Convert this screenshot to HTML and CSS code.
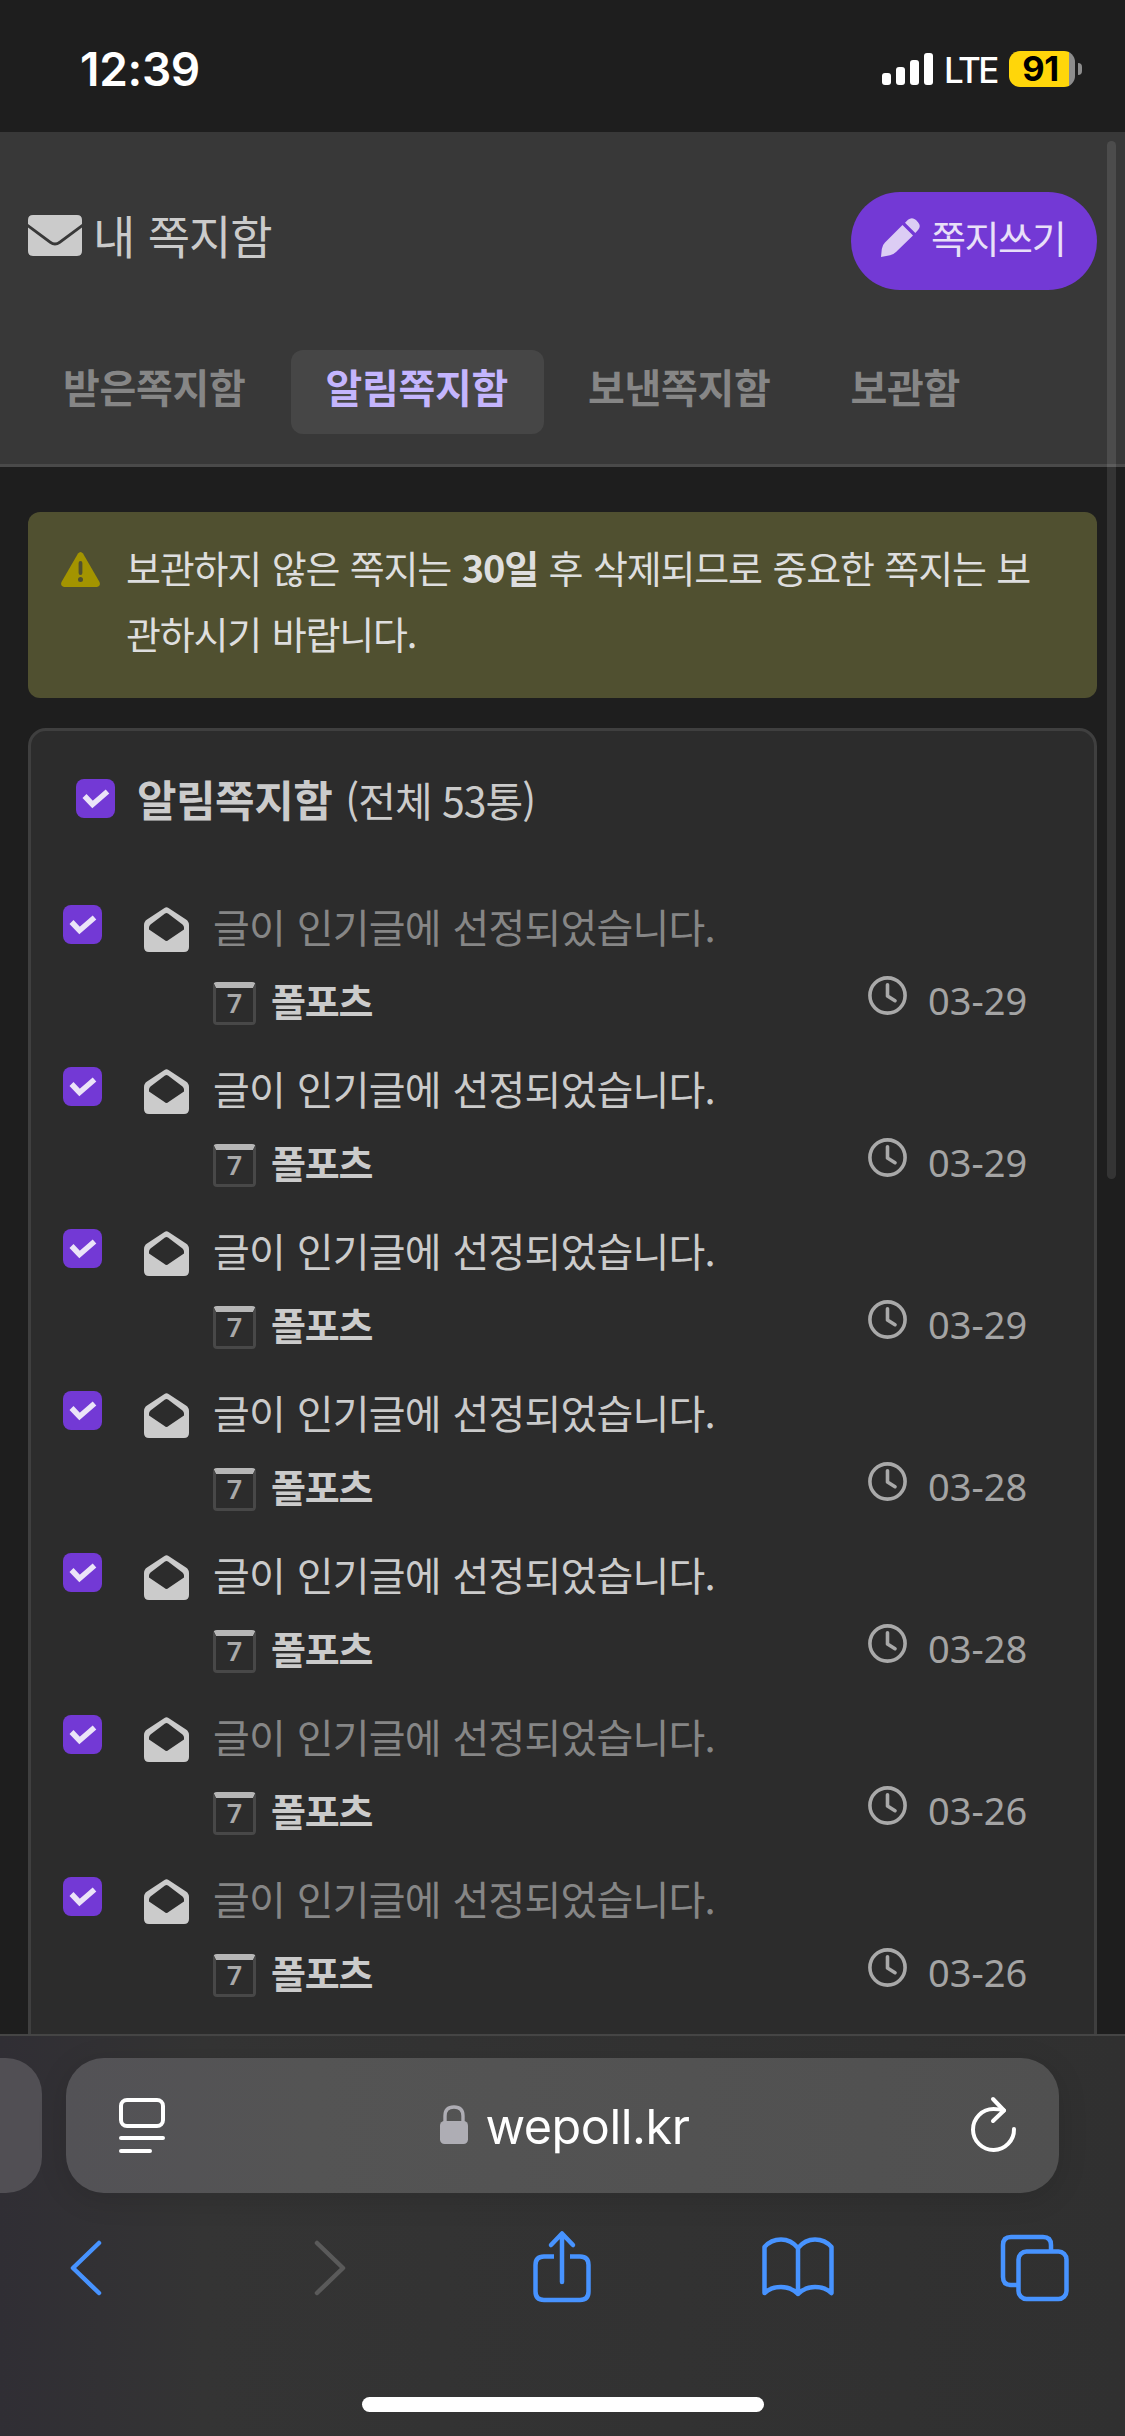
FILE: index.html
```html
<!DOCTYPE html>
<html lang="ko">
<head>
<meta charset="utf-8">
<title>내 쪽지함</title>
<link rel="stylesheet" href="styles.css">
</head>
<body>
<svg class="defs" width="0" height="0">
  <symbol id="open-mail" viewBox="0 0 45 45"><path fill-rule="evenodd" d="M20.500 1Q22.500-.5 24.500 1L42 12.500Q45 14.500 45 18V40Q45 45 40 45H5Q0 45 0 40V18Q0 14.500 3 12.500ZM24 6.500Q22.500 5.600 21 6.500L6.500 17.500Q5 19 5 20.500V22.500L20.500 33Q22.500 35 24.500 33L40 22.500V20.500Q40 19 38.500 17.500Z"/></symbol>
  <symbol id="check" viewBox="0 0 39 39"><path d="M8.500 17L16.500 25.500L31.500 12.500" fill="none" stroke="#ebe4f8" stroke-width="5.500"/></symbol>
  <symbol id="clock" viewBox="0 0 39 39"><g fill="none" stroke="currentColor" stroke-width="3.600" stroke-linecap="round" stroke-linejoin="round"><circle cx="19.500" cy="19.500" r="17.600"/><path d="M19.500 8.700V20L27 24.700"/></g></symbol>
</svg>
<div class="phone">
  <header class="status">
    <span class="time">12:39</span>
    <span class="signal"><i></i><i></i><i></i><i></i></span>
    <span class="lte">LTE</span>
    <span class="battery">91</span><span class="nub"></span>
  </header>

  <main class="page">
    <section class="head">
      <div class="title-row">
        <svg class="mail" viewBox="0 0 54 41"><path d="M5 0H49Q54 0 54 5V9L31 26Q27 29 23 26L0 9V5Q0 0 5 0ZM0 12.500L21.500 28.500Q27 32.500 32.500 28.500L54 12.500V36Q54 41 49 41H5Q0 41 0 36Z"/></svg>
        <h1>내 쪽지함</h1>
        <button class="write">
          <svg viewBox="0 0 39 39"><path d="M21.500 7L32 17.500L15 34Q12.500 36.500 9 37.200L0 39L.8 31Q1.300 27 4 24.500ZM24 4.700L27 1.800Q31-1.500 35 2L37 4.200Q40.500 8 37 12L34.300 15Z"/></svg>
          <span>쪽지쓰기</span>
        </button>
      </div>
      <nav class="tabs">
        <a>받은쪽지함</a><a class="active">알림쪽지함</a><a>보낸쪽지함</a><a>보관함</a>
      </nav>
    </section>

    <section class="alert">
      <svg viewBox="0 0 39 35"><path fill="#a39400" d="M17 1.500Q19.500-1.500 22 1.500L38.500 30Q40 34 36 35H3Q-1 34 .5 30Z"/><path d="M19.500 11V21" stroke="#505030" stroke-width="3.800" stroke-linecap="round"/><circle cx="19.500" cy="27.500" r="2.500" fill="#505030"/></svg>
      <p>보관하지 않은 쪽지는 <b>30일</b> 후 삭제되므로 중요한 쪽지는 보<br>관하시기 바랍니다.</p>
    </section>

    <section class="card">
      <div class="card-head"><svg class="box"><use href="#check"/></svg><h2>알림쪽지함</h2><span>(전체 53통)</span></div>
      <div class="row read"><svg class="box"><use href="#check"/></svg><svg class="open"><use href="#open-mail"/></svg><div class="msg"><p>글이 인기글에 선정되었습니다.</p><div class="meta"><i class="level">7</i><b>폴포츠</b><svg class="clock"><use href="#clock"/></svg><time>03-29</time></div></div></div>
      <div class="row"><svg class="box"><use href="#check"/></svg><svg class="open"><use href="#open-mail"/></svg><div class="msg"><p>글이 인기글에 선정되었습니다.</p><div class="meta"><i class="level">7</i><b>폴포츠</b><svg class="clock"><use href="#clock"/></svg><time>03-29</time></div></div></div>
      <div class="row"><svg class="box"><use href="#check"/></svg><svg class="open"><use href="#open-mail"/></svg><div class="msg"><p>글이 인기글에 선정되었습니다.</p><div class="meta"><i class="level">7</i><b>폴포츠</b><svg class="clock"><use href="#clock"/></svg><time>03-29</time></div></div></div>
      <div class="row"><svg class="box"><use href="#check"/></svg><svg class="open"><use href="#open-mail"/></svg><div class="msg"><p>글이 인기글에 선정되었습니다.</p><div class="meta"><i class="level">7</i><b>폴포츠</b><svg class="clock"><use href="#clock"/></svg><time>03-28</time></div></div></div>
      <div class="row"><svg class="box"><use href="#check"/></svg><svg class="open"><use href="#open-mail"/></svg><div class="msg"><p>글이 인기글에 선정되었습니다.</p><div class="meta"><i class="level">7</i><b>폴포츠</b><svg class="clock"><use href="#clock"/></svg><time>03-28</time></div></div></div>
      <div class="row read"><svg class="box"><use href="#check"/></svg><svg class="open"><use href="#open-mail"/></svg><div class="msg"><p>글이 인기글에 선정되었습니다.</p><div class="meta"><i class="level">7</i><b>폴포츠</b><svg class="clock"><use href="#clock"/></svg><time>03-26</time></div></div></div>
      <div class="row read"><svg class="box"><use href="#check"/></svg><svg class="open"><use href="#open-mail"/></svg><div class="msg"><p>글이 인기글에 선정되었습니다.</p><div class="meta"><i class="level">7</i><b>폴포츠</b><svg class="clock"><use href="#clock"/></svg><time>03-26</time></div></div></div>
    </section>
  </main>

  <footer class="browser">
    <div class="address-row">
      <div class="prev-tab"></div>
      <div class="address">
        <svg class="reader" viewBox="0 0 46 55"><g fill="none" stroke="#fff" stroke-width="4" stroke-linecap="round"><rect x="2" y="2" width="42" height="26" rx="6"/><path d="M2 40H44M2 53H31"/></g></svg>
        <div class="site"><svg viewBox="0 0 28 39"><rect y="16" width="28" height="23" rx="4.500" fill="#aeadb4"/><path d="M5 18V11Q5 2 14 2T23 11V18" fill="none" stroke="#aeadb4" stroke-width="3.400"/></svg><span>wepoll.kr</span></div>
        <svg class="reload" viewBox="0 0 46 54"><g fill="none" stroke="#fff" stroke-width="4" stroke-linecap="round" stroke-linejoin="round"><path d="M43 32A20.500 20.500 0 1 1 22.500 12Q28 12 33 13.500"/><path d="M22 2L33 13.500L22 24"/></g></svg>
      </div>
    </div>
    <div class="tools">
      <svg class="back" viewBox="0 0 31 54"><path d="M29 2L3 27L29 52"/></svg>
      <svg class="forward" viewBox="0 0 31 54"><path d="M2 2L28 27L2 52"/></svg>
      <svg class="share" viewBox="0 0 58 72"><path stroke-linecap="butt" d="M21 25.500H11Q2.500 25.500 2.500 34V60.500Q2.500 69 11 69H47Q55.500 69 55.500 60.500V34Q55.500 25.500 47 25.500H37"/><path d="M29 51V3M18 14L29 2.500L40 14"/></svg>
      <svg class="book" viewBox="0 0 72 60"><path d="M36 57V11Q29 2.500 19 2.500Q9 2.500 2.500 10V56Q9 50 19 50Q29 50 36 57Q43 50 53 50Q63 50 69.500 56V10Q63 2.500 53 2.500Q43 2.500 36 11"/></svg>
      <svg class="pages" viewBox="0 0 68 66"><path stroke-linecap="butt" d="M16 50H10Q2 50 2 42V10Q2 2 10 2H42Q50 2 50 10V15"/><rect x="17.500" y="16.500" width="48" height="47.500" rx="8"/></svg>
    </div>
    <div class="home"></div>
  </footer>
  <div class="scrollbar"></div>
</div>
</body>
</html>
```
FILE: styles.css
```css
* { box-sizing: border-box; margin: 0; padding: 0; }
body { width: 1125px; height: 2436px; overflow: hidden; background: #1e1e1e; font-family: "Noto Sans CJK KR", sans-serif; color: #cbcbcb; }
svg { display: block; flex: none; overflow: visible; }
i { font-style: normal; }
.defs { position: absolute; }
.phone { position: relative; height: 2436px; display: flex; flex-direction: column; overflow: hidden; }

.status { height: 132px; flex: none; display: flex; align-items: flex-start; padding: 51px 43px 0 80px; font-family: Inter, sans-serif; color: #fff; }
.time { font-size: 46px; font-weight: 600; line-height: 36px; letter-spacing: -.300px; margin-right: auto; }
.signal { display: flex; align-items: flex-end; gap: 5px; height: 34px; width: 62px; }
.signal i { width: 9px; background: #fff; border-radius: 3px; }
.signal i:nth-child(1) { height: 12px; }
.signal i:nth-child(2) { height: 18px; }
.signal i:nth-child(3) { height: 25px; }
.signal i:nth-child(4) { height: 32px; }
.lte { width: 65px; font-size: 35px; font-weight: 500; line-height: 38px; letter-spacing: -2.500px; }
.battery { width: 66px; height: 36px; border-radius: 11px; background: linear-gradient(90deg, #ffd60a 60px, #8d8d8d 60px); color: #000; font-size: 34.500px; font-weight: 700; line-height: 36px; text-align: center; letter-spacing: -.300px; padding-right: 3px; }
.nub { width: 4px; height: 12px; margin: 12px 0 0 3px; border-radius: 0 4px 4px 0; background: #8d8d8d; }

.page { height: 1902px; flex: none; overflow: hidden; display: flex; flex-direction: column; }
.head { height: 335px; flex: none; background: #383838; border-bottom: 3px solid #4a4a4a; padding: 60px 28px 0; }
.title-row { height: 98px; display: flex; align-items: center; }
.mail { width: 54px; height: 41px; margin: -11px 11px 0 0; fill: #cbcbcb; }
h1 { font-size: 46px; font-weight: 400; line-height: 60px; margin-top: -14px; letter-spacing: -1px; word-spacing: 1.500px; flex: 1; }
.write { width: 246px; height: 98px; border: 0; border-radius: 49px; background: #7339d5; color: #e8e0f8; display: flex; align-items: center; padding-left: 30px; gap: 11px; font: 400 38px/50px "Noto Sans CJK KR", sans-serif; letter-spacing: -1.400px; }
.write svg { width: 39px; height: 39px; fill: #dccdf4; margin-top: -8px; }
.write span { margin-top: -8px; }
.tabs { display: flex; margin-top: 60px; }
.tabs a { height: 84px; padding: 0 36px 0 35px; border-radius: 12px; font-size: 40px; font-weight: 700; line-height: 73px; letter-spacing: -.300px; color: #868686; }
.tabs a + a { margin-left: 9px; }
.tabs .active { background: #464646; color: #c4b5fd; }

.alert { height: 186px; flex: none; margin: 45px 28px 30px; padding: 22px 30px 0 33px; border-radius: 12px; background: #505030; display: flex; color: #dedede; }
.alert svg { width: 39px; height: 35px; margin: 18px 26px 0 0; }
.alert p { font-size: 38px; line-height: 66px; letter-spacing: -1.200px; word-spacing: 1.200px; white-space: nowrap; }

.card { flex: none; height: 1500px; margin: 0 28px; border: 3px solid #3f3f3f; border-radius: 18px; background: #2c2c2c; }
.card-head { display: flex; height: 174px; padding: 48px 0 0 45px; }
.box { width: 39px; height: 39px; border-radius: 8px; background: #7339d5; }
.card-head h2 { font-size: 43px; line-height: 50px; margin: -6px 0 0 22px; letter-spacing: -.500px; }
.card-head span { font-size: 41px; line-height: 50px; margin: -5px 0 0 13px; letter-spacing: -1px; word-spacing: 0; }
.row { display: flex; height: 162px; padding-left: 32px; }
.open { width: 45px; height: 45px; margin: 2px 24px 0 42px; fill: #cbcbcb; }
.msg { flex: 1; }
.msg p { font-size: 40px; line-height: 50px; margin-top: -4px; letter-spacing: -.800px; word-spacing: 1.300px; white-space: nowrap; }
.read p { color: #868686; }
.meta { display: flex; height: 50px; margin-top: 25px; padding-right: 62px; }
.level { width: 43px; height: 43px; margin-top: 6px; border: 3px solid #484848; border-top: 6px solid #b6b6b6; border-radius: 4px; font: 600 27px/29px "Noto Sans", sans-serif; text-align: center; color: #a9a9a9; }
.meta b { font-size: 38px; line-height: 50px; margin: -1px auto 0 15px; letter-spacing: -1.200px; }
.clock { width: 39px; height: 39px; color: #a9a9a9; }
.meta time { width: 104px; margin: 1px 0 0 21px; font: 400 38px/46px "Noto Sans", sans-serif; letter-spacing: 0; color: #a4a4a4; white-space: nowrap; }

.browser { flex: 1; border-top: 2px solid #454545; background: linear-gradient(90deg, #302e34, #343434 18%, #323232 60%, #303030); }
.address-row { display: flex; gap: 24px; margin-top: 22px; }
.prev-tab { width: 42px; height: 135px; border-radius: 0 36px 36px 0; background: #514f54; }
.address { width: 993px; height: 135px; border-radius: 38px; background: linear-gradient(90deg, #535256, #545454 25%, #505050); display: flex; align-items: center; padding: 0 42px 0 53px; box-shadow: 0 6px 30px rgba(0,0,0,.12); }
.reader { width: 46px; height: 55px; }
.site { flex: 1; display: flex; justify-content: center; align-items: center; gap: 17px; color: #fff; font: 400 48.500px/60px Inter, sans-serif; letter-spacing: -.450px; padding-right: 6px; }
.site svg { width: 28px; height: 39px; margin-top: -3px; }
.site span { margin-top: 2px; }
.reload { width: 46px; height: 54px; margin-top: -3px; }
.tools { display: flex; align-items: center; height: 72px; margin-top: 38px; padding: 0 56px 0 70px; fill: none; stroke: #4793ff; stroke-width: 4.500; stroke-linecap: round; stroke-linejoin: round; }
.back { width: 31px; height: 54px; margin-top: 2px; }
.forward { width: 31px; height: 54px; margin: 2px 0 0 214px; stroke: #5a5a5a; }
.share { width: 58px; height: 72px; margin-left: 187px; }
.book { width: 72px; height: 60px; margin-left: 171px; }
.pages { width: 68px; height: 66px; margin: 2px 0 0 auto; }
.home { width: 402px; height: 15px; margin: 94px auto 0; border-radius: 8px; background: #fff; }
.scrollbar { position: absolute; left: 1107px; top: 141px; width: 9px; height: 1038px; border-radius: 5px; background: rgba(255,255,255,.1); }
```
